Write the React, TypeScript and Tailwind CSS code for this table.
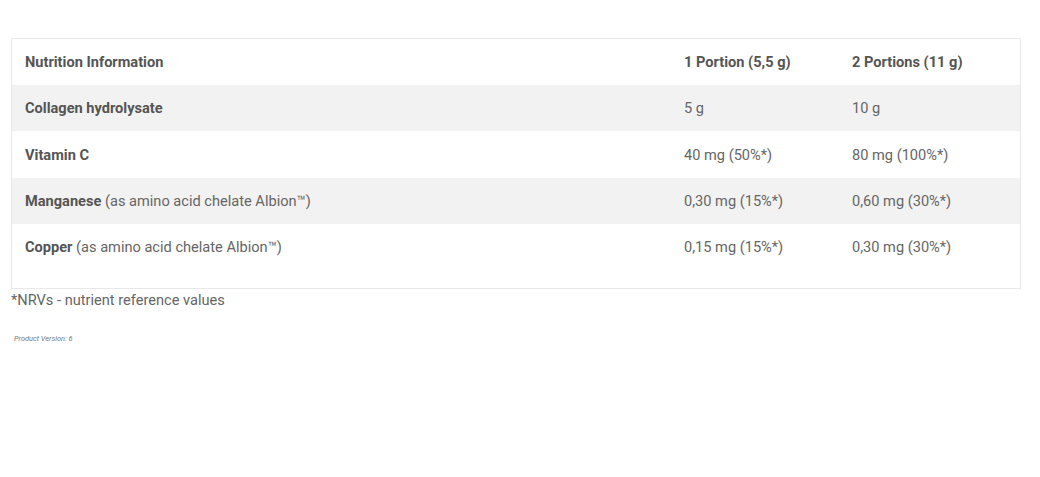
import React from "react";

const rows: { name: string; extra?: string; a: string; b: string; h: string; gray: boolean }[] = [
  { name: "Collagen hydrolysate", a: "5 g", b: "10 g", h: "h-[46px]", gray: true },
  { name: "Vitamin C", a: "40 mg (50%*)", b: "80 mg (100%*)", h: "h-[47px]", gray: false },
  { name: "Manganese", extra: " (as amino acid chelate Albion™)", a: "0,30 mg (15%*)", b: "0,60 mg (30%*)", h: "h-[46px]", gray: true },
  { name: "Copper", extra: " (as amino acid chelate Albion™)", a: "0,15 mg (15%*)", b: "0,30 mg (30%*)", h: "h-[46px]", gray: false },
];

export default function App() {
  return (
    <div className="w-[1040px] h-[477px] bg-white pt-[38px] pl-[11px] text-[14.6px] text-[#666]" style={{ fontFamily: "Roboto, 'Liberation Sans', sans-serif" }}>
      <div className="w-[1010px] border border-[#e8e8e8] pb-[18px]">
        <div className="flex items-center h-[46px] font-bold text-[#555] pt-[2px]">
          <div className="w-[672px] pl-[13px]">Nutrition Information</div>
          <div className="w-[168px]">1 Portion (5,5 g)</div>
          <div>2 Portions (11 g)</div>
        </div>
        {rows.map((r) => (
          <div key={r.name} className={`flex items-center pt-[2px] ${r.h} ${r.gray ? "bg-[#f2f2f2]" : "bg-white"}`}>
            <div className="w-[672px] pl-[13px]">
              <span className="font-bold text-[#555]">{r.name}</span>
              {r.extra && <span>{r.extra}</span>}
            </div>
            <div className="w-[168px]">{r.a}</div>
            <div>{r.b}</div>
          </div>
        ))}
      </div>
      <div className="mt-[1px] leading-[20px]">*NRVs - nutrient reference values</div>
      <div className="mt-[24px] pl-[3px] text-[7.4px] italic text-[#777] leading-[10px]">Product Version: 6</div>
    </div>
  );
}
